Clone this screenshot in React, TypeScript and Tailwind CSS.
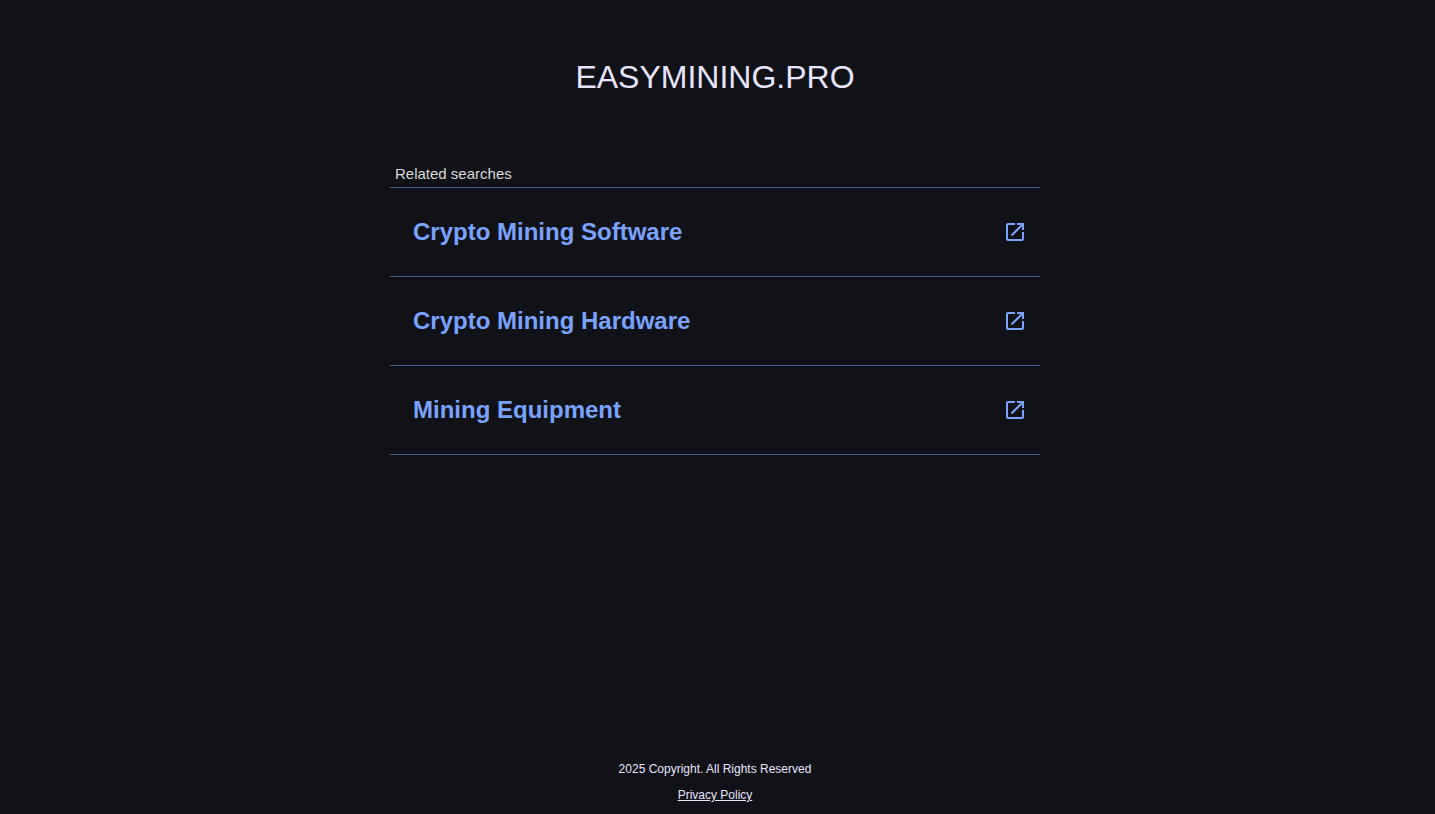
const searches = [
  "Crypto Mining Software",
  "Crypto Mining Hardware",
  "Mining Equipment",
];

function OpenInNewIcon() {
  return (
    <svg
      className="size-6 shrink-0"
      viewBox="0 0 24 24"
      fill="currentColor"
      aria-hidden="true"
    >
      <path d="M19 19H5V5h7V3H5c-1.11 0-2 .9-2 2v14c0 1.1.89 2 2 2h14c1.1 0 2-.9 2-2v-7h-2v7zM14 3v2h3.59l-9.83 9.83 1.41 1.41L19 6.41V10h2V3h-7z" />
    </svg>
  );
}

function App() {
  return (
    <div className="flex min-h-screen flex-col items-center bg-[#101217] pr-[5px] font-['Liberation_Sans',Arial,sans-serif] text-[#e8e4fc]">
      <header className="pt-14 pb-[66px]">
        <h1 className="text-[32px] leading-[42px]">EASYMINING.PRO</h1>
      </header>

      <main className="w-full max-w-[650px]">
        <h2 className="px-[5px] pb-1 text-[15px] leading-[19px] text-[#d8d8d8]">
          Related searches
        </h2>
        <ul className="border-t border-[#40608f]">
          {searches.map((label) => (
            <li key={label} className="border-b border-[#40608f]">
              <a
                href="#"
                className="flex h-22 items-center justify-between pr-[13px] pl-[23px] text-2xl font-bold text-[#7aa2ff]"
              >
                <span>{label}</span>
                <OpenInNewIcon />
              </a>
            </li>
          ))}
        </ul>
      </main>

      <footer className="mt-auto flex flex-col items-center gap-3 pt-10 pb-3 text-xs leading-[14px]">
        <p>2025 Copyright. All Rights Reserved</p>
        <a href="#" className="underline">
          Privacy Policy
        </a>
      </footer>
    </div>
  );
}

export default App;
